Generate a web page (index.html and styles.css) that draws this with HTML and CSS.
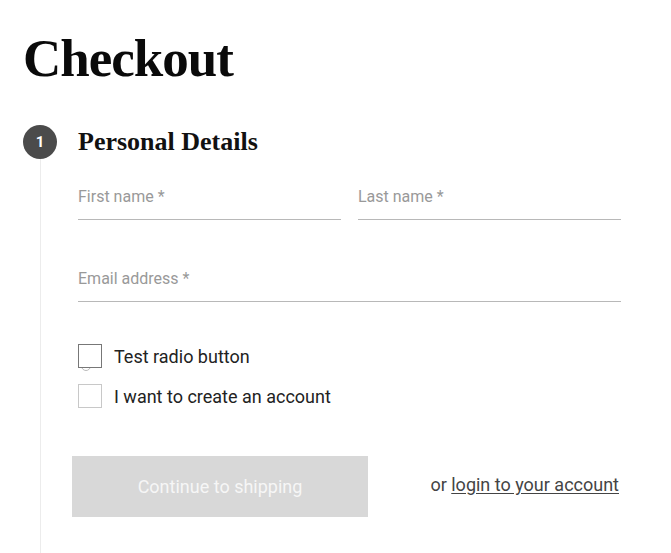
FILE: index.html
```html
<!DOCTYPE html>
<html>
<head>
<meta charset="utf-8">
<link rel="stylesheet" href="styles.css">
</head>
<body>
<div class="page">
  <h1 class="title">Checkout</h1>
  <section class="step">
    <div class="step-head">
      <div class="badge">1</div>
      <h2 class="step-title">Personal Details</h2>
    </div>
    <div class="step-body">
      <div class="row">
        <div class="field first"><span class="label">First name *</span></div>
        <div class="field first"><span class="label">Last name *</span></div>
      </div>
      <div class="row">
        <div class="field"><span class="label">Email address *</span></div>
      </div>
      <div class="checks">
        <label class="check"><span class="box dark"><span class="radio"></span></span><span class="check-text">Test radio button</span></label>
        <label class="check"><span class="box"></span><span class="check-text">I want to create an account</span></label>
      </div>
      <div class="actions">
        <button class="btn">Continue to shipping</button>
        <span class="alt">or <a class="link">login to your account</a></span>
      </div>
    </div>
  </section>
</div>
</body>
</html>
```
FILE: styles.css
```css
* { box-sizing: border-box; }
html { background: #fff; }
html, body { margin: 0; padding: 0; }
body { font-family: Roboto, "Liberation Sans", sans-serif; color: #222; overflow: hidden; height: 553px; }
.page { padding: 26px 0 0 23px; width: 621px; }
.title {
  margin: 0;
  font-family: "Liberation Serif", "DejaVu Serif", serif;
  font-weight: 700;
  font-size: 53px;
  line-height: 64px;
  color: #0a0a0a;
  letter-spacing: -1px;
}
.step { margin-top: 35px; position: relative; }
.step::before {
  content: "";
  position: absolute;
  left: 17px;
  top: 30px;
  height: 420px;
  width: 1px;
  background: #ececec;
}
.step-head { display: flex; align-items: center; gap: 21px; height: 34px; }
.badge {
  width: 34px; height: 34px; border-radius: 50%;
  background: #4b4b4b; color: #fff;
  display: flex; align-items: center; justify-content: center;
  font-weight: 700; font-size: 15px; flex: none;
  position: relative; z-index: 1;
}
.step-title {
  margin: 0;
  font-family: "Liberation Serif", "DejaVu Serif", serif;
  font-weight: 700; font-size: 26px; color: #111;
  line-height: 34px;
}
.step-body { padding-left: 55px; }
.row { display: flex; gap: 17px; }
.field {
  flex: 1;
  height: 82px;
  padding-bottom: 12px;
  border-bottom: 1px solid #b8b8b8;
  display: flex; flex-direction: column; justify-content: flex-end;
}
.field.first { height: 61px; }
.label { font-size: 16px; color: #999; line-height: 20px; }
.checks { margin-top: 42px; display: flex; flex-direction: column; gap: 16px; }
.check { display: flex; align-items: center; gap: 12px; height: 24px; }
.box {
  width: 24px; height: 24px; border: 1px solid #c8c8c8; background: #fff; flex: none; position: relative;
}
.box.dark { border-color: #777; }
.radio {
  position: absolute; left: 2px; top: 16px; width: 10px; height: 10px; border-radius: 50%;
  border: 1px solid #bbb; z-index: -1;
}
.check-text { font-size: 18px; color: #222; }
.actions { margin-top: 48px; margin-left: -6px; display: flex; align-items: center; justify-content: space-between; }
.btn {
  width: 296px; height: 61px; border: 0; background: #d8d8d8; color: #f6f6f6;
  font-family: Roboto, "Liberation Sans", sans-serif; font-size: 18px; padding: 0;
}
.alt { font-size: 18px; color: #444; margin-right: 2px; margin-top: -4px; }
.link { color: #444; text-decoration: underline; text-underline-offset: 2px; }
```
